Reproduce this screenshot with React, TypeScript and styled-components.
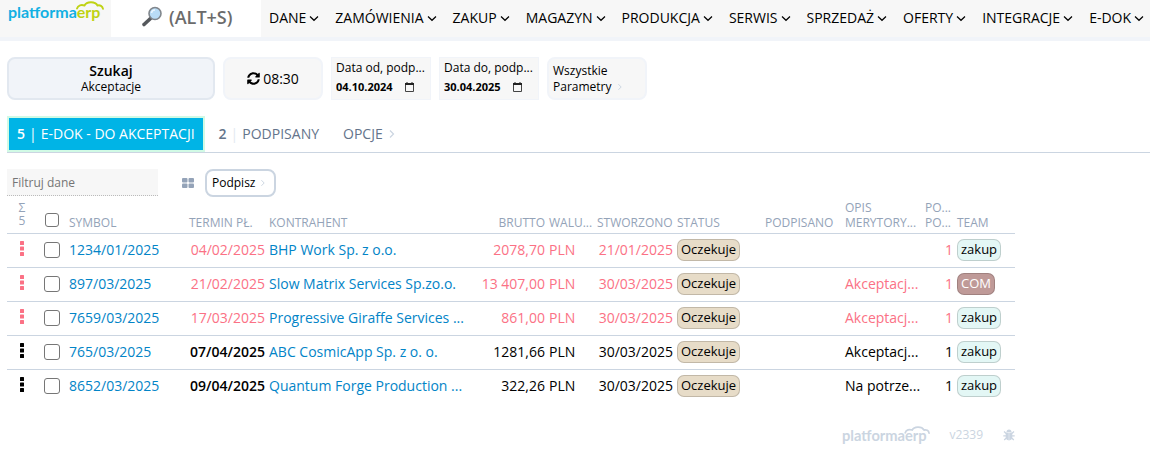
import React from "react";
import styled, { createGlobalStyle, css } from "styled-components";

const color = {
  text: "#000000",
  bar: "#f7f7f7",
  pale: "#f1f4f9",
  edge: "#e2e8f0",
  line: "#cbd5e1",
  muted: "#94a3b8",
  slate: "#64748b",
  link: "#0284c7",
  late: "#fb7185",
  active: "#00b4e6",
};

const GlobalStyle = createGlobalStyle`
  *, *::before, *::after { box-sizing: border-box; }
  body {
    margin: 0;
    background: #ffffff;
    color: ${color.text};
    font-family: "Open Sans", "Noto Sans", sans-serif;
    font-size: 14px;
    line-height: 20px;
  }
  button, input { font: inherit; color: inherit; margin: 0; }
  button { cursor: pointer; }
  a { text-decoration: none; }
`;

const Page = styled.div`
  overflow-x: hidden;
`;

const Header = styled.header`
  display: flex;
  align-items: stretch;
  height: 41px;
  background: ${color.bar};
  border-bottom: 4px solid ${color.pale};
`;

const HomeLink = styled.a`
  flex: none;
  width: 111px;
  padding: 0 0 0 8px;
`;

const Search = styled.label`
  flex: none;
  display: flex;
  align-items: center;
  gap: 6px;
  width: 150px;
  padding: 0 0 3px 30px;
  background: #ffffff;
`;

const SearchInput = styled.input`
  width: 80px;
  padding: 0;
  border: 0;
  outline: 0;
  background: transparent;
  font-size: 18px;
  font-weight: 600;
  &::placeholder { color: #6b6b6b; opacity: 1; }
`;

const Nav = styled.nav`
  display: flex;
  align-items: center;
`;

const NavButton = styled.button`
  display: flex;
  align-items: center;
  gap: 3px;
  padding: 0 8px 1px;
  border: 0;
  background: transparent;
  white-space: nowrap;
`;

const Toolbar = styled.section`
  display: flex;
  gap: 8px;
  padding: 16px 7px;
`;

const ToolButton = styled.button<{ $kind?: "primary" | "stacked" }>`
  display: flex;
  align-items: center;
  justify-content: center;
  gap: 3px;
  width: 100px;
  height: 43px;
  padding: 0 4px;
  border: 2px solid ${color.pale};
  border-radius: 8px;
  background: ${color.bar};
  ${(p) =>
    p.$kind === "primary" &&
    css`
      flex-direction: column;
      gap: 0;
      width: 208px;
      border-color: ${color.edge};
      background: ${color.pale};
    `}
  ${(p) =>
    p.$kind === "stacked" &&
    css`
      flex-direction: column;
      align-items: flex-start;
      gap: 0;
    `}
`;

const ButtonTitle = styled.span`
  font-weight: 600;
  line-height: 16px;
`;

const ButtonNote = styled.span`
  display: flex;
  align-items: center;
  gap: 4px;
  font-size: 12px;
  line-height: 16px;
`;

const DateField = styled.label`
  display: flex;
  flex-direction: column;
  width: 100px;
  height: 43px;
  padding: 1px 0 0 4px;
  border: 1px solid ${color.pale};
  background: ${color.bar};
  font-size: 12px;
`;

const DateLabel = styled.span`
  overflow: hidden;
  text-overflow: ellipsis;
  white-space: nowrap;
  line-height: 18px;
`;

const DateRow = styled.span`
  display: flex;
  align-items: center;
  gap: 5px;
`;

const DateInput = styled.input`
  width: 64px;
  height: 20px;
  padding: 0;
  border: 0;
  outline: 0;
  background: transparent;
  font-size: 11px;
  font-weight: 700;
`;

const Tabs = styled.div`
  display: flex;
  align-items: stretch;
  margin-left: 7px;
  border-bottom: 1px solid ${color.line};
`;

const Tab = styled.button<{ $active?: boolean }>`
  display: flex;
  align-items: center;
  gap: 4px;
  height: 36px;
  padding: 0 8px;
  margin-right: 4px;
  border: 2px solid ${(p) => (p.$active ? "#d1fae5" : "transparent")};
  background: ${(p) => (p.$active ? color.active : "transparent")};
  color: ${(p) => (p.$active ? "#ffffff" : color.slate)};
  white-space: nowrap;
`;

const TabCount = styled.span`
  font-weight: 600;
`;

const TabRule = styled.span<{ $active?: boolean }>`
  color: ${(p) => (p.$active ? "#ffffff" : color.edge)};
`;

const ListTools = styled.div`
  display: flex;
  align-items: flex-start;
  padding: 16px 7px 0;
`;

const FilterInput = styled.input`
  width: 151px;
  height: 27px;
  padding: 0 5px;
  border: 0;
  border-bottom: 1px dotted #bbbbbb;
  outline: 0;
  background: ${color.bar};
  font-size: 12px;
  &::placeholder { color: #757575; opacity: 1; }
`;

const IconButton = styled.button`
  display: flex;
  align-items: center;
  justify-content: center;
  padding: 0;
  border: 0;
  background: transparent;
  color: inherit;
`;

const GridToggle = styled(IconButton)`
  height: 27px;
  margin: 0 11px 0 24px;
  color: ${color.muted};
`;

const RowMenu = styled(IconButton)`
  width: 100%;
`;

const SignButton = styled.button`
  display: flex;
  align-items: center;
  gap: 3px;
  height: 28px;
  padding: 0 7px 0 5px;
  border: 2px solid ${color.line};
  border-radius: 8px;
  background: #ffffff;
  font-size: 12px;
`;

const ListArea = styled.main`
  width: 1008px;
  max-width: 100%;
  margin-left: 7px;
`;

const Table = styled.table`
  width: 100%;
  margin-top: 3px;
  border-collapse: collapse;
  table-layout: fixed;
`;

const Col = styled.col<{ $width?: number }>`
  width: ${(p) => (p.$width ? `${p.$width}px` : "auto")};
`;

const HeadCell = styled.th<{ $align?: string }>`
  padding: 0 2px 3px;
  vertical-align: bottom;
  text-align: ${(p) => p.$align || "left"};
  color: ${color.muted};
  font-size: 12px;
  font-weight: 400;
  line-height: 15px;
  overflow: hidden;
  text-overflow: ellipsis;
  white-space: nowrap;
`;

const HeadLine = styled.span`
  display: block;
  overflow: hidden;
  text-overflow: ellipsis;
`;

const HeadSum = styled.span`
  display: block;
  padding-bottom: 3px;
  line-height: 13px;
`;

const Row = styled.tr<{ $late?: boolean }>`
  height: 34px;
  border-top: 1px solid ${color.line};
  color: ${(p) => (p.$late ? color.late : color.text)};
`;

const Cell = styled.td<{ $align?: string; $strong?: boolean }>`
  padding: 0 2px 2px;
  text-align: ${(p) => p.$align || "left"};
  font-weight: ${(p) => (p.$strong ? 600 : 400)};
  overflow: hidden;
  text-overflow: ellipsis;
  white-space: nowrap;
`;

const CellLink = styled.a`
  color: ${color.link};
`;

const Check = styled.input<{ $small?: boolean }>`
  display: block;
  width: ${(p) => (p.$small ? 14 : 16)}px;
  height: ${(p) => (p.$small ? 14 : 16)}px;
  margin: 0 auto;
  margin-bottom: ${(p) => (p.$small ? 3 : 0)}px;
  appearance: none;
  border: 1px solid #767676;
  border-radius: 3px;
  background: #ffffff;
  &:checked { background: ${color.active}; }
`;

const tones = {
  wait: { background: "#e7dcc8", color: "#000000" },
  team: { background: "#e3f7f5", color: "#000000" },
  com: { background: "#bf9a98", color: "#ffffff" },
};

const Badge = styled.span<{ $tone: keyof typeof tones }>`
  display: inline-block;
  height: 22px;
  padding: 0 3px;
  border: 1px solid rgba(0, 0, 0, 0.16);
  border-radius: 7px;
  background: ${(p) => tones[p.$tone].background};
  color: ${(p) => tones[p.$tone].color};
  font-size: 13px;
  line-height: 19px;
  vertical-align: middle;
`;

const Footer = styled.footer`
  display: flex;
  align-items: center;
  justify-content: flex-end;
  gap: 20px;
  padding-top: 21px;
  color: ${color.line};
  font-size: 12px;
`;

function Chevron({ size, right }: { size: number; right?: boolean }) {
  return (
    <svg width={size} height={size} viewBox="0 0 10 10" fill="none" stroke={right ? color.line : "#000"} strokeWidth="1.2" aria-hidden="true">
      <path d={right ? "M3 1.5 6.5 5 3 8.5" : "M1 3.500l4 3.800 4-3.800"} />
    </svg>
  );
}

function Logo({ width, first, second }: { width: number; first: string; second: string }) {
  return (
    <svg width={width} height={(width * 22) / 96} viewBox="0 0 96 22" role="img" aria-label="platformaerp">
      <text x="0" y="18" fontFamily="Lato, sans-serif" fontWeight="700" fontSize="16" fill={first}>
        platforma<tspan fill={second}>erp</tspan>
      </text>
      <path d="M69 8.500C70 5 73.500 4.500 76.500 5.500 78.500 1.500 87 1 89.500 5.500 92 4.800 94.500 6 95 8.800" fill="none" stroke={second} strokeWidth="1.900" strokeLinecap="round" strokeLinejoin="round" />
    </svg>
  );
}

function Magnifier() {
  return (
    <svg width="22" height="22" viewBox="0 0 22 22" aria-hidden="true">
      <path d="M9.500 12.500 3 18.500" stroke="#55585c" strokeWidth="3.600" strokeLinecap="round" />
      <circle cx="14" cy="7.500" r="6" fill="#b9dcf6" stroke="#80868c" strokeWidth="1.600" />
      <path d="M10.500 7a3.500 3.500 0 0 1 3.500-3" fill="none" stroke="#eaf6ff" strokeWidth="1.500" />
    </svg>
  );
}

function Refresh() {
  return (
    <svg width="13" height="13" viewBox="0 0 512 512" aria-hidden="true">
      <path d="M370.700 133.300C339.500 104 298.900 88 255.800 88c-77.500.1-144.300 53.200-162.800 126.900-1.300 5.400-6.100 9.200-11.700 9.200H24.100c-7.500 0-13.200-6.800-11.800-14.200C33.900 94.900 134.800 8 256 8c66.400 0 126.800 26.100 171.300 68.700L463 41c15.100-15.100 41-4.400 41 17v134c0 13.300-10.700 24-24 24H346c-21.400 0-32.100-25.900-17-41zM32 296h134c21.400 0 32.100 25.900 17 41l-41.800 41.800c31.300 29.300 71.800 45.300 114.900 45.300 77.400-.1 144.300-53.100 162.800-126.800 1.300-5.400 6.100-9.200 11.700-9.200h57.300c7.500 0 13.200 6.800 11.800 14.200C478.100 417.100 377.200 504 256 504c-66.400 0-126.800-26.100-171.300-68.700L49 471c-15.100 15.100-41 4.400-41-17V320c0-13.300 10.700-24 24-24z" />
    </svg>
  );
}

function Calendar() {
  return (
    <svg width="9" height="10" viewBox="0 0 9 10" aria-hidden="true">
      <path d="M.5 1.500h8v8h-8z" fill="none" stroke="#444" />
      <path d="M0 1h9v2H0zM1.500 0h1v1h-1zM6.500 0h1v1h-1z" fill="#222" />
    </svg>
  );
}

function GridIcon() {
  return (
    <svg width="12" height="10" viewBox="0 0 12 10" fill="currentColor" aria-hidden="true">
      <rect width="5.500" height="4.500" rx="1" />
      <rect x="6.500" width="5.500" height="4.500" rx="1" />
      <rect y="5.500" width="5.500" height="4.500" rx="1" />
      <rect x="6.500" y="5.500" width="5.500" height="4.500" rx="1" />
    </svg>
  );
}

function Dots() {
  return (
    <svg width="4" height="20" viewBox="0 0 4 20" fill="currentColor" aria-hidden="true">
      <rect y="1" width="4" height="4" rx="0.500" />
      <rect y="6.500" width="4" height="4" rx="0.500" />
      <rect y="12" width="4" height="4" rx="0.500" />
    </svg>
  );
}

function Bug() {
  return (
    <svg width="12" height="12" viewBox="0 0 12 12" aria-hidden="true">
      <path d="M3.500 3a2.500 2.500 0 0 1 5 0z" fill="currentColor" />
      <path d="M2.700 3.500h3.100v7.900C4 11.300 2.700 10 2.700 8zM6.200 3.500h3.100V8c0 2-1.300 3.300-3.100 3.400z" fill="currentColor" />
      <path d="M1 2.500 3.200 4.500M11 2.500 8.800 4.500M.3 6.800H3M9 6.800h2.700M1.200 11 3.300 9M10.800 11 8.700 9" stroke="currentColor" strokeWidth="1.300" />
    </svg>
  );
}

const menu = ["DANE", "ZAMÓWIENIA", "ZAKUP", "MAGAZYN", "PRODUKCJA", "SERWIS", "SPRZEDAŻ", "OFERTY", "INTEGRACJE", "E-DOK"];

const columns = [30, 30, 120, 80, 200, 80, 48, 80, 88, 80, 80, 32, undefined];

type Doc = {
  symbol: string;
  due: string;
  late?: boolean;
  partner: string;
  gross: string;
  created: string;
  note: string;
  team: string;
};

const docs: Doc[] = [
  { symbol: "1234/01/2025", due: "04/02/2025", late: true, partner: "BHP Work Sp. z o.o.", gross: "2078,70", created: "21/01/2025", note: "", team: "zakup" },
  { symbol: "897/03/2025", due: "21/02/2025", late: true, partner: "Slow Matrix Services Sp.zo.o.", gross: "13 407,00", created: "30/03/2025", note: "Akceptacj...", team: "COM" },
  { symbol: "7659/03/2025", due: "17/03/2025", late: true, partner: "Progressive Giraffe Services ...", gross: "861,00", created: "30/03/2025", note: "Akceptacj...", team: "zakup" },
  { symbol: "765/03/2025", due: "07/04/2025", partner: "ABC CosmicApp Sp. z o. o.", gross: "1281,66", created: "30/03/2025", note: "Akceptacj...", team: "zakup" },
  { symbol: "8652/03/2025", due: "09/04/2025", partner: "Quantum Forge Production ...", gross: "322,26", created: "30/03/2025", note: "Na potrze...", team: "zakup" },
];

function DateBox({ label, value }: { label: string; value: string }) {
  return (
    <DateField>
      <DateLabel>{label}</DateLabel>
      <DateRow>
        <DateInput type="text" defaultValue={value} />
        <Calendar />
      </DateRow>
    </DateField>
  );
}

export default function App() {
  return (
    <Page>
      <GlobalStyle />
      <Header>
        <HomeLink href="#">
          <Logo width={96} first="#12b0e3" second="#bfd213" />
        </HomeLink>
        <Search>
          <Magnifier />
          <SearchInput type="text" placeholder="(ALT+S)" aria-label="Szukaj w systemie" />
        </Search>
        <Nav>
          {menu.map((name) => (
            <NavButton key={name} type="button">
              {name}
              <Chevron size={10} />
            </NavButton>
          ))}
        </Nav>
      </Header>

      <Toolbar>
        <ToolButton type="button" $kind="primary">
          <ButtonTitle>Szukaj</ButtonTitle>
          <ButtonNote>Akceptacje</ButtonNote>
        </ToolButton>
        <ToolButton type="button">
          <Refresh />
          08:30
        </ToolButton>
        <DateBox label="Data od, podp..." value="04.10.2024" />
        <DateBox label="Data do, podp..." value="30.04.2025" />
        <ToolButton type="button" $kind="stacked">
          <ButtonNote>Wszystkie</ButtonNote>
          <ButtonNote>
            Parametry <Chevron size={8} right />
          </ButtonNote>
        </ToolButton>
      </Toolbar>

      <Tabs>
        <Tab type="button" $active>
          <TabCount>5</TabCount>
          <TabRule $active>|</TabRule>
          E-DOK - DO AKCEPTACJI
        </Tab>
        <Tab type="button">
          <TabCount>2</TabCount>
          <TabRule>|</TabRule>
          PODPISANY
        </Tab>
        <Tab type="button">
          OPCJE <Chevron size={10} right />
        </Tab>
      </Tabs>

      <ListTools>
        <FilterInput type="text" placeholder="Filtruj dane" aria-label="Filtruj dane" />
        <GridToggle type="button" aria-label="Widok kafelków">
          <GridIcon />
        </GridToggle>
        <SignButton type="button">
          Podpisz <Chevron size={8} right />
        </SignButton>
      </ListTools>

      <ListArea>
        <Table>
          <colgroup>
            {columns.map((width, i) => (
              <Col key={i} $width={width} />
            ))}
          </colgroup>
          <thead>
            <tr>
              <HeadCell $align="center">
                <HeadSum>
                  Σ<br />5
                </HeadSum>
              </HeadCell>
              <HeadCell>
                <Check type="checkbox" $small aria-label="Zaznacz wszystkie" />
              </HeadCell>
              <HeadCell>SYMBOL</HeadCell>
              <HeadCell>TERMIN PŁ.</HeadCell>
              <HeadCell>KONTRAHENT</HeadCell>
              <HeadCell $align="right">BRUTTO</HeadCell>
              <HeadCell>WALU...</HeadCell>
              <HeadCell>STWORZONO</HeadCell>
              <HeadCell>STATUS</HeadCell>
              <HeadCell>PODPISANO</HeadCell>
              <HeadCell>
                <HeadLine>OPIS</HeadLine>
                <HeadLine>MERYTORY...</HeadLine>
              </HeadCell>
              <HeadCell>
                <HeadLine>PO...</HeadLine>
                <HeadLine>PO...</HeadLine>
              </HeadCell>
              <HeadCell>TEAM</HeadCell>
            </tr>
          </thead>
          <tbody>
            {docs.map((doc) => (
              <Row key={doc.symbol} $late={doc.late}>
                <Cell>
                  <RowMenu type="button" aria-label={`Menu ${doc.symbol}`}>
                    <Dots />
                  </RowMenu>
                </Cell>
                <Cell>
                  <Check type="checkbox" aria-label={`Zaznacz ${doc.symbol}`} />
                </Cell>
                <Cell>
                  <CellLink href="#">{doc.symbol}</CellLink>
                </Cell>
                <Cell $align="right" $strong={!doc.late}>{doc.due}</Cell>
                <Cell>
                  <CellLink href="#">{doc.partner}</CellLink>
                </Cell>
                <Cell $align="right">{doc.gross}</Cell>
                <Cell>PLN</Cell>
                <Cell $align="right">{doc.created}</Cell>
                <Cell>
                  <Badge $tone="wait">Oczekuje</Badge>
                </Cell>
                <Cell />
                <Cell>{doc.note}</Cell>
                <Cell $align="right">1</Cell>
                <Cell>
                  <Badge $tone={doc.team === "COM" ? "com" : "team"}>{doc.team}</Badge>
                </Cell>
              </Row>
            ))}
          </tbody>
        </Table>
        <Footer>
          <Logo width={88} first={color.line} second={color.line} />
          <span>v2339</span>
          <IconButton type="button" aria-label="Zgłoś błąd">
            <Bug />
          </IconButton>
        </Footer>
      </ListArea>
    </Page>
  );
}
